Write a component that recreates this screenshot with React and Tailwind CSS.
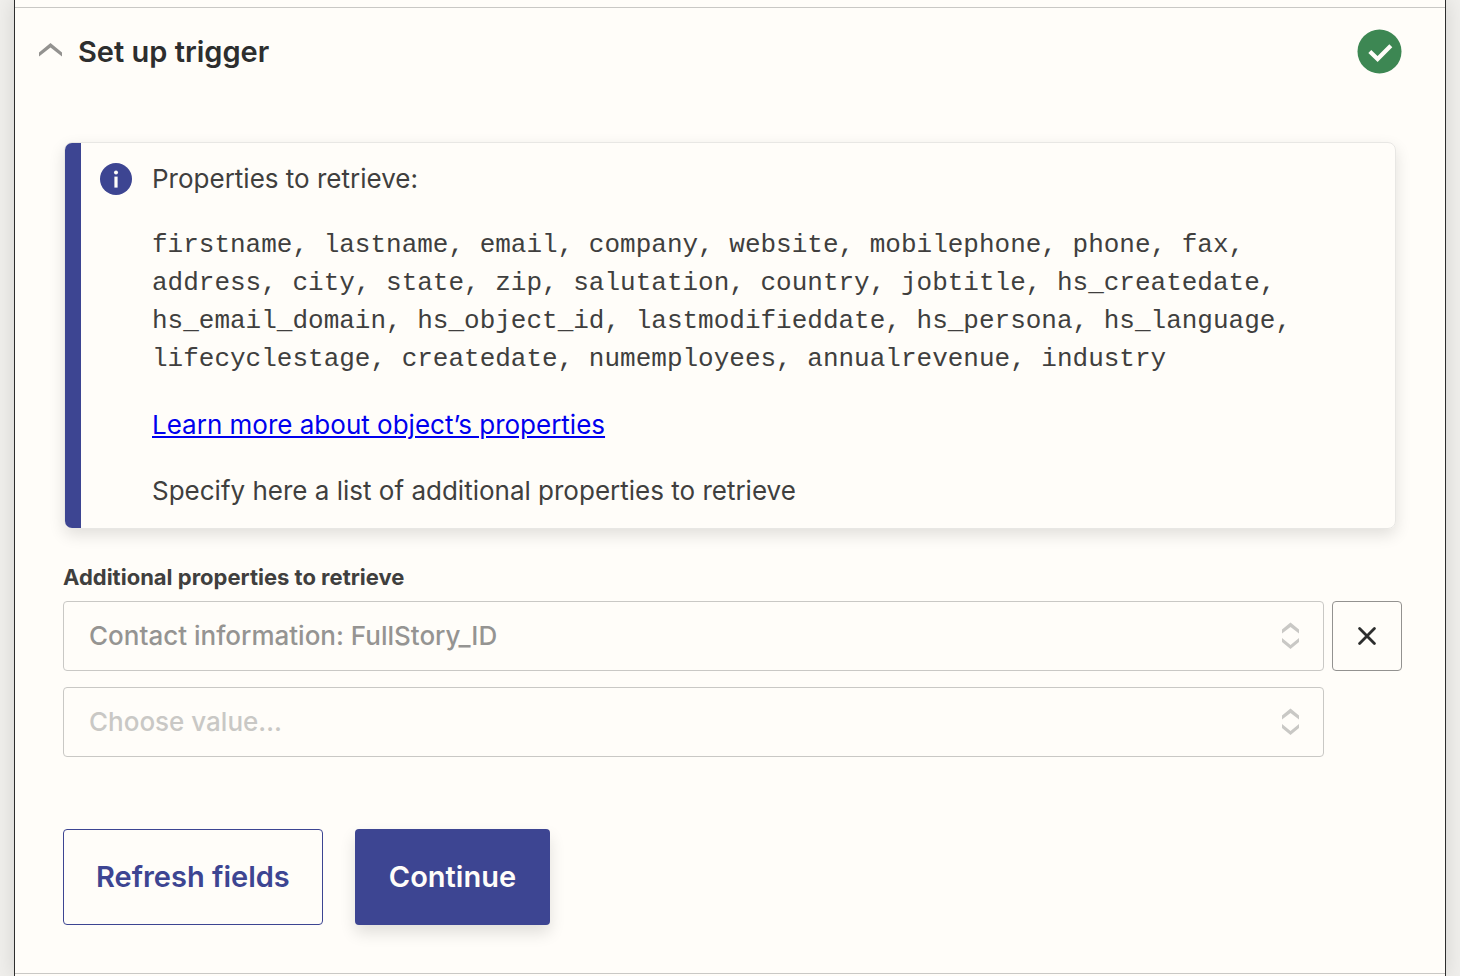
const PROPERTIES = [
  "firstname", "lastname", "email", "company", "website", "mobilephone",
  "phone", "fax", "address", "city", "state", "zip", "salutation", "country",
  "jobtitle", "hs_createdate", "hs_email_domain", "hs_object_id",
  "lastmodifieddate", "hs_persona", "hs_language", "lifecyclestage",
  "createdate", "numemployees", "annualrevenue", "industry",
];

function ChevronUp() {
  return (
    <svg width="24" height="20" viewBox="0 0 24 20" aria-hidden="true">
      <path d="M1 10.4 12.5 1 24 10.4V14.6L12.5 5.6 1 14.6Z" fill="#939290" />
    </svg>
  );
}

function CheckBadge() {
  return (
    <svg
      width="44"
      height="44"
      viewBox="0 0 44 44"
      className="overflow-visible"
      role="img"
      aria-label="Complete"
    >
      <circle cx="21.5" cy="21.5" r="22" fill="#3d8753" />
      <path d="M11.8 21.4 19.6 29 32.8 15.8" fill="none" stroke="#fffdf9" strokeWidth="4.2" />
    </svg>
  );
}

function InfoIcon() {
  return (
    <svg width="32" height="32" viewBox="0 0 32 32" className="shrink-0" aria-hidden="true">
      <circle cx="16" cy="16" r="16" fill="#3d4592" />
      <circle cx="16" cy="9.6" r="2" fill="#fffdf9" />
      <rect x="14.4" y="13.6" width="3.2" height="11" fill="#fffdf9" />
    </svg>
  );
}

function SelectArrows() {
  return (
    <svg
      width="18"
      height="28"
      viewBox="0 0 18 28"
      className="pointer-events-none absolute right-6 top-5"
      aria-hidden="true"
    >
      <path d="M0 8.6 8.5 1.6 17 8.6V12.6L8.5 6 0 12.6Z" fill="#c9c8c5" />
      <path d="M0 17V21L8.5 28 17 21V17L8.5 24Z" fill="#c9c8c5" />
    </svg>
  );
}

function SelectField({ id, value, label, muted }) {
  return (
    <div className="relative">
      <select
        id={id}
        aria-label={label}
        defaultValue={value}
        className={`block h-[70px] w-full appearance-none rounded border border-[#c9c8c5] bg-[#fffdf9] pb-0.5 pl-[25px] pr-16 text-[26px] font-medium ${
          muted ? "text-[#c9c8c5]" : "text-[#959492]"
        }`}
      >
        <option>{value}</option>
      </select>
      <SelectArrows />
    </div>
  );
}

export default function App() {
  return (
    <div className="min-h-screen overflow-hidden bg-[#f0efec] px-[14px] font-['Inter',sans-serif] text-[#403f3e]">
      <main className="min-h-screen border-x border-[#2d2e2e] bg-[#fffdf9] pt-[7px] shadow-[0_0_20px_rgba(0,0,0,0.12)]">
        <section className="border-y border-[#c9c8c5] pb-12 pl-12 pr-[43px]">
          {/* Header */}
          <header className="-ml-[25px] flex h-[88px] items-center justify-between">
            <button className="flex items-center gap-4 text-[29px] font-semibold text-[#2d2e2e]">
              <ChevronUp />
              Set up trigger
            </button>
            <CheckBadge />
          </header>

          {/* Info card */}
          <div className="ml-px mr-1.5 mt-[46px] flex overflow-hidden rounded-lg border border-[#e8e7e4] shadow-[0_6px_16px_rgba(0,0,0,0.12)]">
            <div className="w-4 shrink-0 bg-[#3d4592]" />
            <div className="flex gap-5 pb-[18px] pl-[19px] pr-[70px] pt-[17px]">
              <div className="pt-[3px]">
                <InfoIcon />
              </div>
              <div className="flex flex-col gap-7 text-[26px] leading-[38px]">
                <p>Properties to retrieve:</p>
                <p className="font-['Liberation_Mono',monospace]">
                  {PROPERTIES.join(", ")}
                </p>
                <p>
                  <a href="#properties" className="text-[#0000ee] underline">
                    Learn more about object’s properties
                  </a>
                </p>
                <p>Specify here a list of additional properties to retrieve</p>
              </div>
            </div>
          </div>

          {/* Additional properties */}
          <label
            htmlFor="property-1"
            className="mt-8 block text-[22px] font-bold leading-8"
          >
            Additional properties to retrieve
          </label>
          <div className="mt-2 grid grid-cols-[1fr_70px] gap-x-2 gap-y-4">
            <SelectField id="property-1" value="Contact information: FullStory_ID" />
            <button
              aria-label="Remove property"
              className="flex h-[70px] items-center justify-center rounded border border-[#939290] text-[#2d2e2e]"
            >
              <svg width="18" height="18" viewBox="0 0 18 18" aria-hidden="true">
                <path
                  d="M1.6 1.6 16.4 16.4M16.4 1.6 1.6 16.4"
                  stroke="currentColor"
                  strokeWidth="2.8"
                  strokeLinecap="round"
                />
              </svg>
            </button>
            <SelectField id="property-2" label="Another property" value="Choose value…" muted />
          </div>

          {/* Actions */}
          <div className="mt-[72px] flex gap-8 text-[29px] font-semibold">
            <button className="h-24 rounded border border-[#3d4592] px-8 text-[#3d4592]">
              Refresh fields
            </button>
            <button className="h-24 rounded bg-[#3d4592] px-[34px] text-[#fffdf9] shadow-[0_8px_16px_rgba(0,0,0,0.12)]">
              Continue
            </button>
          </div>
        </section>
      </main>
    </div>
  );
}
